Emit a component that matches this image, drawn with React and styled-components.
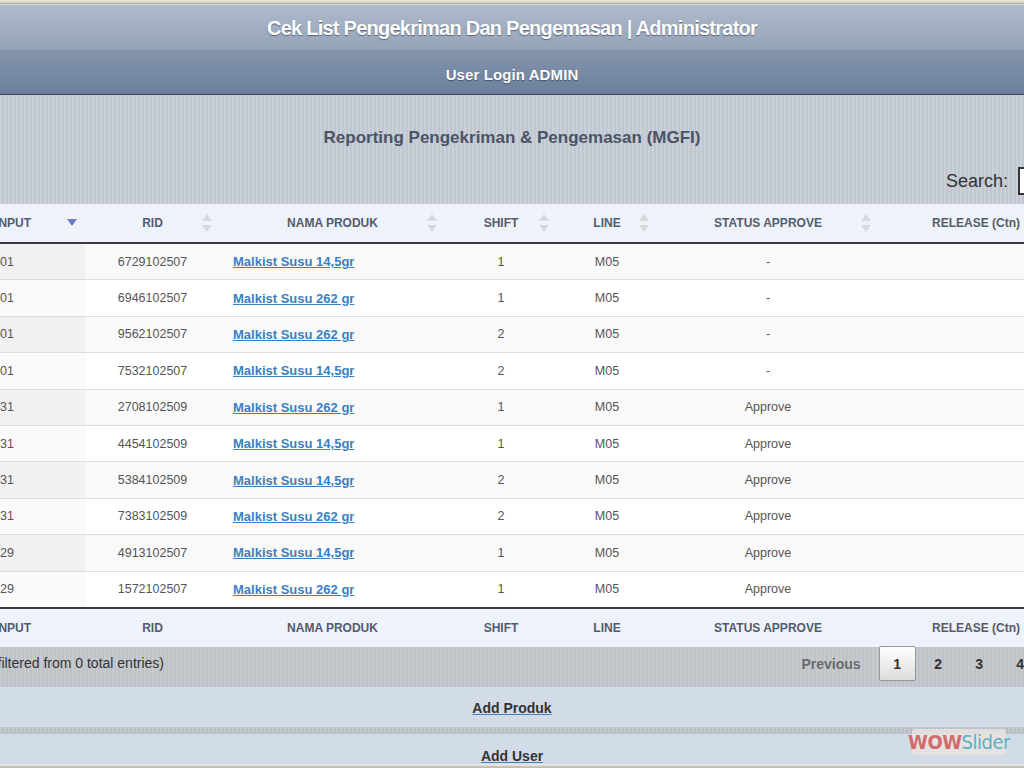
import React from "react";
import styled, { createGlobalStyle } from "styled-components";

const GlobalStyle = createGlobalStyle`
  html, body {
    margin: 0;
    padding: 0;
    overflow: hidden;
    background: #c9ced6;
    font-family: "Liberation Sans", Arial, sans-serif;
  }
`;

const rows = [
  { tgl: "2025-10-01", rid: "6729102507", produk: "Malkist Susu 14,5gr", shift: 1, line: "M05", status: "-" },
  { tgl: "2025-10-01", rid: "6946102507", produk: "Malkist Susu 262 gr", shift: 1, line: "M05", status: "-" },
  { tgl: "2025-10-01", rid: "9562102507", produk: "Malkist Susu 262 gr", shift: 2, line: "M05", status: "-" },
  { tgl: "2025-10-01", rid: "7532102507", produk: "Malkist Susu 14,5gr", shift: 2, line: "M05", status: "-" },
  { tgl: "2025-09-31", rid: "2708102509", produk: "Malkist Susu 262 gr", shift: 1, line: "M05", status: "Approve" },
  { tgl: "2025-09-31", rid: "4454102509", produk: "Malkist Susu 14,5gr", shift: 1, line: "M05", status: "Approve" },
  { tgl: "2025-09-31", rid: "5384102509", produk: "Malkist Susu 14,5gr", shift: 2, line: "M05", status: "Approve" },
  { tgl: "2025-09-31", rid: "7383102509", produk: "Malkist Susu 262 gr", shift: 2, line: "M05", status: "Approve" },
  { tgl: "2025-09-29", rid: "4913102507", produk: "Malkist Susu 14,5gr", shift: 1, line: "M05", status: "Approve" },
  { tgl: "2025-09-29", rid: "1572102507", produk: "Malkist Susu 262 gr", shift: 1, line: "M05", status: "Approve" },
];

const columns = [
  { label: "TGL INPUT", width: 155, sorted: true },
  { label: "RID", width: 135 },
  { label: "NAMA PRODUK", width: 225 },
  { label: "SHIFT", width: 112 },
  { label: "LINE", width: 100 },
  { label: "STATUS APPROVE", width: 222 },
  { label: "RELEASE (Ctn)", width: 194 },
];

function SortIcon({ active }) {
  if (active) {
    return (
      <SortMark>
        <svg width="10" height="8" viewBox="0 0 10 8">
          <path d="M0 0 L10 0 L5 7 Z" fill="#6b79c9" />
        </svg>
      </SortMark>
    );
  }
  return (
    <SortMark>
      <svg width="10" height="18" viewBox="0 0 10 18">
        <path d="M5 0 L10 7 L0 7 Z" fill="#d8d8dc" />
        <path d="M0 11 L10 11 L5 18 Z" fill="#d8d8dc" />
      </svg>
    </SortMark>
  );
}

export default function App() {
  return (
    <>
      <GlobalStyle />
      <Frame>
        <TopEdge />
        <TitleBar>Cek List Pengekriman Dan Pengemasan | Administrator</TitleBar>
        <UserBar>User Login ADMIN</UserBar>

        <Content>
          <ReportTitle>Reporting Pengekriman &amp; Pengemasan (MGFI)</ReportTitle>
          <SearchRow>
            <label>Search:</label>
            <SearchInput type="text" />
          </SearchRow>

          <Table>
            <colgroup>
              {columns.map((c) => (
                <col key={c.label} style={{ width: c.width }} />
              ))}
            </colgroup>
            <thead>
              <tr>
                {columns.map((c, i) => (
                  <HeadCell key={c.label} $first={i === 0}>
                    {c.label}
                    {i < columns.length - 1 && <SortIcon active={c.sorted} />}
                  </HeadCell>
                ))}
              </tr>
            </thead>
            <tbody>
              {rows.map((r, i) => (
                <Row key={r.rid} $odd={i % 2 === 0}>
                  <Cell $align="left" $pad={20}>{r.tgl}</Cell>
                  <Cell $align="center">{r.rid}</Cell>
                  <Cell $align="left">
                    <ProductLink href="#">{r.produk}</ProductLink>
                  </Cell>
                  <Cell $align="center">{r.shift}</Cell>
                  <Cell $align="center">{r.line}</Cell>
                  <Cell $align="center">{r.status}</Cell>
                  <Cell $align="center"></Cell>
                </Row>
              ))}
            </tbody>
            <tfoot>
              <tr>
                {columns.map((c, i) => (
                  <FootCell key={c.label} $first={i === 0}>
                    {c.label}
                  </FootCell>
                ))}
              </tr>
            </tfoot>
          </Table>
        </Content>

        <InfoBar>
          <Info>
            <span>Showing 1 to 10 of 10 entries (filtered from 0 total entries)</span>
          </Info>
          <Pager>
            <PageText>Previous</PageText>
            <PageButton $current>1</PageButton>
            <PageButton>2</PageButton>
            <PageButton>3</PageButton>
            <PageButton>4</PageButton>
            <PageText>Next</PageText>
          </Pager>
        </InfoBar>

        <ActionBar $h={40}>
          <ActionLink href="#">Add Produk</ActionLink>
        </ActionBar>
        <Gap />
        <ActionBar $h={30} $bottom>
          <ActionLink href="#">Add User</ActionLink>
        </ActionBar>
        <BottomEdge />

        <Badge>
          <Wow>WOW</Wow>
          <Slider>Slider</Slider>
        </Badge>
      </Frame>
    </>
  );
}

const Frame = styled.div`
  position: relative;
  width: 1024px;
  height: 768px;
  overflow: hidden;
  display: flex;
  flex-direction: column;
`;

const TopEdge = styled.div`
  height: 5px;
  background: linear-gradient(#ebe8e0 0, #d4d0c4 50%, #a9a79f 75%, #f2f4f8 100%);
`;

const TitleBar = styled.div`
  height: 45px;
  display: flex;
  align-items: center;
  justify-content: center;
  padding-top: 2px;
  box-sizing: border-box;
  background: linear-gradient(#afbacb, #95a3b8);
  color: #fff;
  font-size: 20px;
  font-weight: 700;
  letter-spacing: -0.75px;
  text-shadow: 0 1px 1px rgba(40, 50, 70, 0.6);
`;

const UserBar = styled.div`
  height: 45px;
  display: flex;
  align-items: center;
  justify-content: center;
  padding-top: 4px;
  box-sizing: border-box;
  background: linear-gradient(#8494ac, #6c7f9c);
  border-bottom: 1px solid #3b4659;
  color: #fff;
  font-size: 15px;
  font-weight: 700;
  letter-spacing: 0.1px;
  text-shadow: 0 1px 1px rgba(40, 50, 70, 0.6);
`;

const Content = styled.div`
  background: repeating-linear-gradient(90deg, #c9d0d8 0 2px, #c0c7d0 2px 4px);
  display: flex;
  flex-direction: column;
`;

const ReportTitle = styled.div`
  padding-top: 33px;
  line-height: 20px;
  text-align: center;
  color: #4b5467;
  font-size: 17px;
  font-weight: 700;
`;

const SearchRow = styled.div`
  height: 56px;
  box-sizing: border-box;
  padding-top: 19px;
  display: flex;
  justify-content: flex-end;
  align-items: flex-start;
  gap: 10px;
  margin-right: -54px;
  color: #333;
  font-size: 18px;
  line-height: 28px;
`;

const SearchInput = styled.input`
  width: 60px;
  height: 28px;
  border: 2px solid #333;
  background: #fff;
  box-sizing: border-box;
`;

const Table = styled.table`
  table-layout: fixed;
  border-collapse: collapse;
  width: 1143px;
  margin-left: -70px;
  color: #555;
  font-size: 12.5px;
`;

const HeadCell = styled.th`
  position: relative;
  height: 38px;
  padding: 0 10px;
  background: #eef2fa;
  border-bottom: 2px solid #3a3a3a;
  color: #545c6b;
  font-size: 12px;
  font-weight: 700;
  text-align: ${(p) => (p.$first ? "left" : "center")};
  padding-left: ${(p) => (p.$first ? "38px" : "10px")};
`;

const FootCell = styled.td`
  height: 38px;
  padding: 0 10px;
  background: #eef2fa;
  border-top: 2px solid #3a3a3a;
  color: #545c6b;
  font-size: 12px;
  font-weight: 700;
  text-align: ${(p) => (p.$first ? "left" : "center")};
  padding-left: ${(p) => (p.$first ? "38px" : "10px")};
`;

const SortMark = styled.span`
  position: absolute;
  right: 8px;
  top: 50%;
  transform: translateY(-50%);
  display: flex;
`;

const Row = styled.tr`
  background: ${(p) => (p.$odd ? "#f9f9f9" : "#ffffff")};
  & > td:first-child {
    background: ${(p) => (p.$odd ? "#f1f1f1" : "#fafafa")};
  }
`;

const Cell = styled.td`
  height: 35.4px;
  padding: 0 13px;
  padding-left: ${(p) => p.$pad || 13}px;
  border-top: 1px solid #dcdcdc;
  text-align: ${(p) => p.$align};
`;

const ProductLink = styled.a`
  color: #3a7fc4;
  font-size: 13px;
  font-weight: 700;
  text-decoration: underline;
`;

const InfoBar = styled.div`
  flex: 1;
  min-height: 38px;
  display: flex;
  align-items: center;
  justify-content: space-between;
  background: repeating-linear-gradient(90deg, #c6cacf 0 2px, #bec3c9 2px 4px);
`;

const Info = styled.div`
  width: 164px;
  display: flex;
  justify-content: flex-end;
  white-space: nowrap;
  color: #333;
  font-size: 14px;
  margin-top: -7px;
`;

const Pager = styled.div`
  display: flex;
  align-items: center;
  margin-right: -85px;
  margin-top: -6px;
`;

const PageText = styled.span`
  padding: 0 18px;
  color: #6b6b6b;
  font-size: 14px;
  font-weight: 700;
`;

const PageButton = styled.span`
  width: 37px;
  height: 35px;
  margin-right: 4px;
  box-sizing: border-box;
  display: flex;
  align-items: center;
  justify-content: center;
  color: #333;
  font-size: 14px;
  font-weight: 700;
  border: 1px solid ${(p) => (p.$current ? "#979797" : "transparent")};
  border-radius: 2px;
  background: ${(p) => (p.$current ? "linear-gradient(#ffffff, #dcdcdc)" : "transparent")};
`;

const ActionBar = styled.div`
  height: ${(p) => p.$h}px;
  flex-shrink: 0;
  display: flex;
  justify-content: center;
  align-items: ${(p) => (p.$bottom ? "flex-end" : "center")};
  padding-top: ${(p) => (p.$bottom ? "0" : "1px")};
  box-sizing: border-box;
  background: #d2dce8;
`;

const ActionLink = styled.a`
  color: #333;
  font-size: 14px;
  font-weight: 700;
  text-decoration: underline;
  text-decoration-color: #4a7fbf;
`;

const Gap = styled.div`
  height: 7px;
  flex-shrink: 0;
  background: repeating-linear-gradient(90deg, #c4c9cf 0 2px, #b9bec5 2px 4px);
`;

const BottomEdge = styled.div`
  height: 4px;
  flex-shrink: 0;
  background: linear-gradient(#f2f2f0, #b7b3a8);
`;

const Badge = styled.div`
  position: absolute;
  left: 912px;
  top: 729px;
  width: 94px;
  height: 26px;
  display: flex;
  align-items: center;
  justify-content: center;
  background: rgba(232, 228, 224, 0.85);
  border-radius: 3px;
  font-family: "DejaVu Sans Condensed", "DejaVu Sans", sans-serif;
  font-size: 20px;
  letter-spacing: -0.5px;
`;

const Wow = styled.span`
  color: #d26b6d;
  font-weight: 700;
`;

const Slider = styled.span`
  color: #5eb0c6;
`;
